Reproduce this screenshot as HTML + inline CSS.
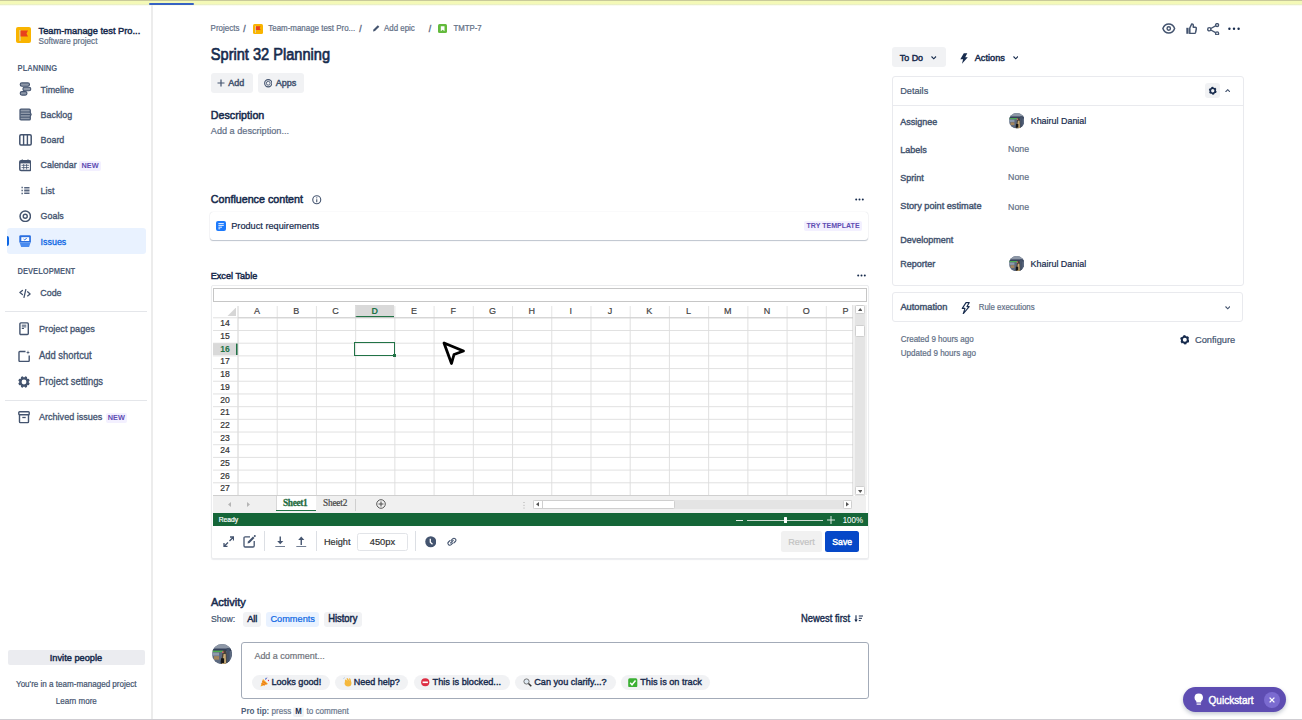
<!DOCTYPE html>
<html><head><meta charset="utf-8"><style>
html,body{margin:0;padding:0;}
body{width:1302px;height:720px;overflow:hidden;position:relative;background:#fff;font-family:"Liberation Sans",sans-serif;}
.t{position:absolute;white-space:nowrap;}
.r{position:absolute;}
</style></head><body>
<div class="r" style="left:0px;top:0px;width:1302px;height:6px;background:linear-gradient(#c8c99b 0px,#c8c99b 0.8px,#f4f9b7 1.2px,#f4f9b7 3.8px,#e9eec8 4.6px,#fbfcf4 5.6px,#fff 6px);"></div>
<div class="r" style="left:149.3px;top:3px;width:44.6px;height:2.2px;background:#3762c2;border-radius:1px;"></div>
<div class="r" style="left:0px;top:718.5px;width:1302px;height:1.5px;background:#cfcdd2;"></div>
<div class="r" style="left:151px;top:5px;width:2.4px;height:714px;background:#ececec;"></div>
<div class="r" style="left:15.5px;top:27px;width:15.5px;height:16px;background:#f9b400;border-radius:2px;"></div>
<svg class="r" style="left:15.5px;top:27px;" width="16" height="16" viewBox="0 0 16 16"><rect x="3.5" y="3" width="1" height="11" fill="#d9dde3"/><path d="M4.5 3.5 H12 L10.5 6.5 L12 9.5 H4.5Z" fill="#e8401c"/></svg>
















<div class="r" style="left:7px;top:228px;width:139px;height:25.5px;background:#e9f2ff;border-radius:3px;z-index:-1;"></div>
<div class="r" style="left:6.5px;top:236px;width:2.5px;height:9.5px;background:#0c66e4;border-radius:0 2px 2px 0;"></div>
<div class="r" style="left:79.4px;top:161px;width:21.7px;height:9.6px;background:#f3f0ff;border-radius:2px;z-index:-1;"></div>

<div class="r" style="left:105.6px;top:413px;width:21.7px;height:9.6px;background:#f3f0ff;border-radius:2px;z-index:-1;"></div>

<div class="r" style="left:5px;top:310.7px;width:142px;height:1px;background:#e4e6ea;"></div>
<div class="r" style="left:5px;top:399.5px;width:142px;height:1px;background:#e4e6ea;"></div>
<svg class="r" style="left:18.5px;top:82.2px;" width="13" height="14" viewBox="0 0 13 14"><rect x="1.2" y="0.9" width="9.3" height="3.4" rx="1.7" fill="#8f99a9" stroke="#44546f" stroke-width="1.1"/><rect x="3.9" y="5.2" width="7.9" height="3.5" rx="1.75" fill="#8f99a9" stroke="#44546f" stroke-width="1.1"/><rect x="1.2" y="9.6" width="6.8" height="3.5" rx="1.75" fill="#8f99a9" stroke="#44546f" stroke-width="1.1"/></svg>
<svg class="r" style="left:18.5px;top:108px;" width="13" height="13" viewBox="0 0 13 13"><path d="M2 1.2 H10.3 Q11.3 1.2 11.3 2.2 V4.6 L12.1 6.4 L11.3 8.2 V10.9 Q11.3 11.9 10.3 11.9 H2 Q1 11.9 1 10.9 V2.2 Q1 1.2 2 1.2Z" fill="#8f99a9" stroke="#44546f" stroke-width="1.2"/><path d="M1.2 4 H11 M1.6 6.6 H11.6 M1.2 9.2 H11" stroke="#44546f" stroke-width="1"/></svg>
<svg class="r" style="left:18.5px;top:134px;" width="13" height="12" viewBox="0 0 13 12"><rect x="0.8" y="0.8" width="11.4" height="10.2" rx="1.2" fill="none" stroke="#44546f" stroke-width="1.5"/><path d="M4.6 1 V11 M8.4 1 V11" stroke="#44546f" stroke-width="1.4"/></svg>
<svg class="r" style="left:18.8px;top:159px;" width="12.5" height="12.5" viewBox="0 0 12.5 12.5"><rect x="0.8" y="1.8" width="10.8" height="9.8" rx="1.3" fill="none" stroke="#44546f" stroke-width="1.5"/><rect x="0.8" y="1.8" width="10.8" height="2.6" fill="#44546f"/><path d="M3.3 0.5 V2.5 M9 0.5 V2.5" stroke="#44546f" stroke-width="1.3"/><path d="M2.5 6.3 H10 M2.5 8.6 H10 M4.7 5 V10.5 M7.6 5 V10.5" stroke="#44546f" stroke-width="0.8"/></svg>
<svg class="r" style="left:21px;top:185.5px;" width="9" height="10" viewBox="0 0 9 10"><path d="M0.5 1.5 H1.8 M0.5 4.5 H1.8 M0.5 7.5 H1.8" stroke="#44546f" stroke-width="1.3"/><path d="M3.2 1.5 H8.5 M3.2 3 H8.5 M3.2 4.5 H8.5 M3.2 6 H8.5 M3.2 7.5 H8.5" stroke="#44546f" stroke-width="0.9"/></svg>
<svg class="r" style="left:18.7px;top:209.8px;" width="12.5" height="12.5" viewBox="0 0 12.5 12.5"><circle cx="6.25" cy="6.25" r="5.2" fill="none" stroke="#44546f" stroke-width="1.5"/><circle cx="6.25" cy="6.25" r="2" fill="none" stroke="#44546f" stroke-width="1.4"/></svg>
<svg class="r" style="left:19px;top:234.8px;" width="12.5" height="12.5" viewBox="0 0 12.5 12.5"><path d="M1.6 0.3 H10.6 Q11.9 0.3 11.9 1.6 V7.6 H0.3 V1.6 Q0.3 0.3 1.6 0.3Z" fill="#2a6fe0"/><rect x="2.3" y="2.2" width="7.9" height="3.8" fill="#fff"/><path d="M4.6 4 L5.7 5 L7.7 3" stroke="#2a6fe0" stroke-width="1" fill="none"/><path d="M0.6 7.4 H11.6 L10 12.2 H2.2Z" fill="#4a8bef"/></svg>
<svg class="r" style="left:19px;top:289px;" width="12" height="9" viewBox="0 0 12 9"><path d="M3.4 1.5 L0.9 3.6 L3.4 5.5 M8.6 2.8 L11.1 4.9 L8.6 6.9 M6.8 0.6 L5 8.4" stroke="#44546f" stroke-width="1.3" fill="none" stroke-linecap="round" stroke-linejoin="round"/></svg>
<svg class="r" style="left:18.5px;top:322px;" width="10" height="13.5" viewBox="0 0 10 13.5"><rect x="0.9" y="0.9" width="8.4" height="11.6" rx="1" fill="none" stroke="#44546f" stroke-width="1.4"/><path d="M2.8 3.2 H7.3 M2.8 4.9 H7.3 M2.8 6.5 H5" stroke="#44546f" stroke-width="1"/></svg>
<svg class="r" style="left:18px;top:349.5px;" width="12.5" height="12.5" viewBox="0 0 12.5 12.5"><path d="M7.5 1.5 H1.8 Q1 1.5 1 2.3 V10.6 Q1 11.4 1.8 11.4 H10.4 Q11.2 11.4 11.2 10.6 V5.5" stroke="#44546f" stroke-width="1.4" fill="none"/><path d="M10 0.3 L10.5 1.9 L12 2.4 L10.5 2.9 L10 4.5 L9.5 2.9 L8 2.4 L9.5 1.9Z" fill="#44546f"/></svg>
<svg class="r" style="left:17.8px;top:376px;" width="12" height="12" viewBox="0 0 12 12"><path d="M10.76 6.58 L11.67 7.24 L10.88 9.13 L9.78 8.96 L8.96 9.78 L9.13 10.88 L7.24 11.67 L6.58 10.76 L5.42 10.76 L4.76 11.67 L2.87 10.88 L3.04 9.78 L2.22 8.96 L1.12 9.13 L0.33 7.24 L1.24 6.58 L1.24 5.42 L0.33 4.76 L1.12 2.87 L2.22 3.04 L3.04 2.22 L2.87 1.12 L4.76 0.33 L5.42 1.24 L6.58 1.24 L7.24 0.33 L9.13 1.12 L8.96 2.22 L9.78 3.04 L10.88 2.87 L11.67 4.76 L10.76 5.42Z M8.40 6.00 A2.4 2.4 0 1 0 3.60 6.00 A2.4 2.4 0 1 0 8.40 6.00Z" fill="#44546f" fill-rule="evenodd"/></svg>
<svg class="r" style="left:18px;top:411px;" width="12" height="12.5" viewBox="0 0 12 12.5"><rect x="0.8" y="0.8" width="10.4" height="3" rx="0.8" fill="none" stroke="#44546f" stroke-width="1.4"/><path d="M1.5 3.8 V10.8 Q1.5 11.6 2.3 11.6 H9.7 Q10.5 11.6 10.5 10.8 V3.8" fill="none" stroke="#44546f" stroke-width="1.4"/><path d="M4.3 6.5 H7.7" stroke="#44546f" stroke-width="1.3"/></svg>
<div class="r" style="left:8px;top:650px;width:137px;height:15px;background:#ebecf0;border-radius:2px;"></div>





<div class="r" style="left:252.8px;top:24px;width:10px;height:10px;background:#f9b400;border-radius:1.5px;"></div>
<svg class="r" style="left:252.8px;top:24px;" width="10" height="10" viewBox="0 0 10 10"><rect x="2.2" y="1.8" width="0.7" height="7" fill="#d9dde3"/><path d="M2.9 2.2 H7.6 L6.6 4 L7.6 5.9 H2.9Z" fill="#e8401c"/></svg>


<svg class="r" style="left:372px;top:24px;" width="8.5" height="8.5" viewBox="0 0 8.5 8.5"><path d="M1 7.5 L1.5 5.5 L5.8 1.2 L7.3 2.7 L3 7 Z" fill="#44546f"/></svg>


<div class="r" style="left:438.2px;top:24.2px;width:9.3px;height:9.3px;background:#63ba3c;border-radius:1.5px;"></div>
<svg class="r" style="left:438.2px;top:24.2px;" width="9.3" height="9.3" viewBox="0 0 9.3 9.3"><path d="M2.8 2.2 H6.5 V7.2 L4.65 5.7 L2.8 7.2Z" fill="#fff"/></svg>


<div class="r" style="left:210.6px;top:73.3px;width:42.2px;height:19.5px;background:#f1f2f4;border-radius:3px;"></div>
<svg class="r" style="left:216.5px;top:79px;" width="8" height="8" viewBox="0 0 8 8"><path d="M4 0.5 V7.5 M0.5 4 H7.5" stroke="#44546f" stroke-width="1.2"/></svg>

<div class="r" style="left:257.8px;top:73.3px;width:46.6px;height:19.5px;background:#f1f2f4;border-radius:3px;"></div>
<svg class="r" style="left:263.7px;top:79px;" width="8.5" height="8.5" viewBox="0 0 8.5 8.5"><circle cx="4.25" cy="4.25" r="3.6" fill="none" stroke="#44546f" stroke-width="1.1"/><circle cx="4.25" cy="4.25" r="1.9" fill="none" stroke="#44546f" stroke-width="0.9"/></svg>




<svg class="r" style="left:312.2px;top:195px;" width="9.5" height="9.5" viewBox="0 0 9.5 9.5"><circle cx="4.75" cy="4.75" r="4" fill="none" stroke="#44546f" stroke-width="1.1"/><path d="M4.75 4.2 V7.3" stroke="#44546f" stroke-width="1.1"/><circle cx="4.75" cy="2.8" r="0.65" fill="#44546f"/></svg>
<svg class="r" style="left:854.5px;top:197.5px;" width="9" height="3" viewBox="0 0 9 3"><circle cx="1.2" cy="1.5" r="1" fill="#172b4d"/><circle cx="4.5" cy="1.5" r="1" fill="#172b4d"/><circle cx="7.8" cy="1.5" r="1" fill="#172b4d"/></svg>
<div class="r" style="left:210.4px;top:212px;width:657.4px;height:28px;background:#fff;border-radius:3px;box-shadow:0 1px 1px rgba(9,30,66,0.25),0 0 1px rgba(9,30,66,0.2);"></div>
<div class="r" style="left:215.6px;top:221px;width:10.2px;height:9.8px;background:#1d7afc;border-radius:2px;"></div>
<svg class="r" style="left:215.6px;top:221px;" width="10.2" height="9.8" viewBox="0 0 10.2 9.8"><path d="M2.4 2.6 H7.8 M2.4 4.4 H7.8 M2.4 6.2 H6 M2.4 7.8 H4.2" stroke="#fff" stroke-width="0.9"/></svg>

<div class="r" style="left:803.9px;top:221.3px;width:58.5px;height:9.3px;background:#f3f0ff;border-radius:2px;"></div>


<svg class="r" style="left:857px;top:273.5px;" width="9" height="3" viewBox="0 0 9 3"><circle cx="1.2" cy="1.5" r="1" fill="#172b4d"/><circle cx="4.5" cy="1.5" r="1" fill="#172b4d"/><circle cx="7.8" cy="1.5" r="1" fill="#172b4d"/></svg>
<div class="r" style="left:210.5px;top:285.3px;width:658px;height:273.8px;border:1px solid #ebecee;border-radius:2px;box-sizing:border-box;box-shadow:0 1px 1px rgba(9,30,66,0.08);"></div>
<div class="r" style="left:213px;top:288px;width:654px;height:14.3px;border:1.2px solid #c6c6c6;border-top-width:1.6px;box-sizing:border-box;background:#fff;"></div>
<div class="r" style="left:212.5px;top:304.5px;width:640.0px;height:12.800000000000011px;background:#fff;"></div>
<svg class="r" style="left:226.5px;top:306.5px;" width="9.5" height="9.5" viewBox="0 0 9.5 9.5"><path d="M9.5 0 V9.5 H0Z" fill="#d6d6d6"/></svg>
<div class="r" style="left:355.15999999999997px;top:305.0px;width:39.22px;height:12.300000000000011px;background:#d9d9d9;"></div>
<div class="r" style="left:355.15999999999997px;top:315.7px;width:39.22px;height:2px;background:#217346;"></div>
<div class="r" style="left:212.5px;top:342.6857142857143px;width:25.0px;height:12.692857142857141px;background:#d9d9d9;"></div>
<div class="r" style="left:236.3px;top:342.6857142857143px;width:2px;height:12.692857142857141px;background:#217346;"></div>
<svg class="r" style="left:212.5px;top:304.5px;" width="641.0" height="191.5" viewBox="0 0 641.0 191.5"><path d="M64.22 1.00 V12.80" stroke="#e1e1e1" stroke-width="0.9"/><path d="M64.22 12.80 V190.50" stroke="#dcdcdc" stroke-width="0.9"/><path d="M103.44 1.00 V12.80" stroke="#e1e1e1" stroke-width="0.9"/><path d="M103.44 12.80 V190.50" stroke="#dcdcdc" stroke-width="0.9"/><path d="M142.66 1.00 V12.80" stroke="#e1e1e1" stroke-width="0.9"/><path d="M142.66 12.80 V190.50" stroke="#dcdcdc" stroke-width="0.9"/><path d="M181.88 1.00 V12.80" stroke="#e1e1e1" stroke-width="0.9"/><path d="M181.88 12.80 V190.50" stroke="#dcdcdc" stroke-width="0.9"/><path d="M221.10 1.00 V12.80" stroke="#e1e1e1" stroke-width="0.9"/><path d="M221.10 12.80 V190.50" stroke="#dcdcdc" stroke-width="0.9"/><path d="M260.32 1.00 V12.80" stroke="#e1e1e1" stroke-width="0.9"/><path d="M260.32 12.80 V190.50" stroke="#dcdcdc" stroke-width="0.9"/><path d="M299.54 1.00 V12.80" stroke="#e1e1e1" stroke-width="0.9"/><path d="M299.54 12.80 V190.50" stroke="#dcdcdc" stroke-width="0.9"/><path d="M338.76 1.00 V12.80" stroke="#e1e1e1" stroke-width="0.9"/><path d="M338.76 12.80 V190.50" stroke="#dcdcdc" stroke-width="0.9"/><path d="M377.98 1.00 V12.80" stroke="#e1e1e1" stroke-width="0.9"/><path d="M377.98 12.80 V190.50" stroke="#dcdcdc" stroke-width="0.9"/><path d="M417.20 1.00 V12.80" stroke="#e1e1e1" stroke-width="0.9"/><path d="M417.20 12.80 V190.50" stroke="#dcdcdc" stroke-width="0.9"/><path d="M456.42 1.00 V12.80" stroke="#e1e1e1" stroke-width="0.9"/><path d="M456.42 12.80 V190.50" stroke="#dcdcdc" stroke-width="0.9"/><path d="M495.64 1.00 V12.80" stroke="#e1e1e1" stroke-width="0.9"/><path d="M495.64 12.80 V190.50" stroke="#dcdcdc" stroke-width="0.9"/><path d="M534.86 1.00 V12.80" stroke="#e1e1e1" stroke-width="0.9"/><path d="M534.86 12.80 V190.50" stroke="#dcdcdc" stroke-width="0.9"/><path d="M574.08 1.00 V12.80" stroke="#e1e1e1" stroke-width="0.9"/><path d="M574.08 12.80 V190.50" stroke="#dcdcdc" stroke-width="0.9"/><path d="M613.30 1.00 V12.80" stroke="#e1e1e1" stroke-width="0.9"/><path d="M613.30 12.80 V190.50" stroke="#dcdcdc" stroke-width="0.9"/><path d="M25.00 1 V190.50" stroke="#d2d2d2" stroke-width="1"/><path d="M0 12.80 H640.00" stroke="#dedede" stroke-width="0.9"/><path d="M0 25.49 H640.00" stroke="#dedede" stroke-width="0.9"/><path d="M0 38.19 H640.00" stroke="#dedede" stroke-width="0.9"/><path d="M0 50.88 H640.00" stroke="#dedede" stroke-width="0.9"/><path d="M0 63.57 H640.00" stroke="#dedede" stroke-width="0.9"/><path d="M0 76.26 H640.00" stroke="#dedede" stroke-width="0.9"/><path d="M0 88.96 H640.00" stroke="#dedede" stroke-width="0.9"/><path d="M0 101.65 H640.00" stroke="#dedede" stroke-width="0.9"/><path d="M0 114.34 H640.00" stroke="#dedede" stroke-width="0.9"/><path d="M0 127.04 H640.00" stroke="#dedede" stroke-width="0.9"/><path d="M0 139.73 H640.00" stroke="#dedede" stroke-width="0.9"/><path d="M0 152.42 H640.00" stroke="#dedede" stroke-width="0.9"/><path d="M0 165.11 H640.00" stroke="#dedede" stroke-width="0.9"/><path d="M0 177.81 H640.00" stroke="#dedede" stroke-width="0.9"/><path d="M0 190.50 H640.00" stroke="#dedede" stroke-width="0.9"/><path d="M25.00 12.80 H640.00" stroke="#cfcfcf" stroke-width="1.1"/><path d="M0 190.50 H640.00" stroke="#cfcfcf" stroke-width="1.1"/><path d="M640.00 0 V190.50" stroke="#c8c8c8" stroke-width="1"/></svg>
<div class="r" style="left:354.15999999999997px;top:342.0857142857143px;width:40.42px;height:13.89285714285714px;border:1.6px solid #217346;box-sizing:border-box;"></div>
<div class="r" style="left:392.78px;top:353.7785714285714px;width:3.4px;height:3.4px;background:#217346;"></div>
<div class="r" style="left:853px;top:304.5px;width:14px;height:190.5px;background:#f0f0f0;"></div>
<div class="r" style="left:855px;top:305.5px;width:10px;height:190px;background:#e4e4e4;"></div>
<div class="r" style="left:855px;top:305.3px;width:9.5px;height:9px;background:#fff;border:0.8px solid #cfcfcf;border-radius:1.5px;box-sizing:border-box;"></div>
<svg class="r" style="left:857.5px;top:308px;" width="4.5" height="3" viewBox="0 0 4.5 3"><path d="M0 3 L2.25 0 L4.5 3Z" fill="#555"/></svg>
<div class="r" style="left:855px;top:325.3px;width:9.5px;height:11.5px;background:#fff;border:0.8px solid #cfcfcf;border-radius:1.5px;box-sizing:border-box;"></div>
<div class="r" style="left:855px;top:486.3px;width:9.5px;height:9px;background:#fff;border:0.8px solid #cfcfcf;border-radius:1.5px;box-sizing:border-box;"></div>
<svg class="r" style="left:857.5px;top:489.5px;" width="4.5" height="3" viewBox="0 0 4.5 3"><path d="M0 0 L2.25 3 L4.5 0Z" fill="#555"/></svg>
<div class="r" style="left:212.5px;top:495.5px;width:653.5px;height:17.5px;background:#f0f0f0;"></div>
<svg class="r" style="left:227.5px;top:501.5px;" width="3" height="5" viewBox="0 0 3 5"><path d="M3 0 L0 2.5 L3 5Z" fill="#b5b5b5"/></svg>
<svg class="r" style="left:246.5px;top:501.5px;" width="3" height="5" viewBox="0 0 3 5"><path d="M0 0 L3 2.5 L0 5Z" fill="#b5b5b5"/></svg>
<div class="r" style="left:275.5px;top:495.5px;width:40px;height:15.2px;background:#fff;border-left:0.8px solid #d8d8d8;box-sizing:border-box;"></div>
<div class="r" style="left:275.5px;top:509.5px;width:40px;height:1.5px;background:#217346;"></div>


<div class="r" style="left:354.8px;top:498.5px;width:0.9px;height:12px;background:#cfcfcf;"></div>
<svg class="r" style="left:376.3px;top:499.2px;" width="10" height="10" viewBox="0 0 10 10"><circle cx="5" cy="5" r="4.3" fill="none" stroke="#505050" stroke-width="0.95"/><path d="M5 2.5 V7.5 M2.5 5 H7.5" stroke="#505050" stroke-width="1.05"/></svg>
<svg class="r" style="left:522.8px;top:501.5px;" width="2" height="7" viewBox="0 0 2 7"><circle cx="1" cy="0.6" r="0.5" fill="#999"/><circle cx="1" cy="3.3" r="0.5" fill="#999"/><circle cx="1" cy="6" r="0.5" fill="#999"/></svg>
<div class="r" style="left:532.8px;top:499.6px;width:319.5px;height:9.5px;background:#e4e4e4;"></div>
<div class="r" style="left:532.8px;top:499.6px;width:142px;height:9.5px;background:#fff;border:0.8px solid #cfcfcf;border-radius:1.5px;box-sizing:border-box;"></div>
<div class="r" style="left:541.8px;top:499.6px;width:0.9px;height:9.5px;background:#cfcfcf;"></div>
<svg class="r" style="left:536px;top:502.3px;" width="3" height="4.4" viewBox="0 0 3 4.4"><path d="M3 0 L0 2.2 L3 4.4Z" fill="#555"/></svg>
<div class="r" style="left:842.8px;top:499.6px;width:9.4px;height:9.5px;background:#fff;border:0.8px solid #cfcfcf;border-radius:1.5px;box-sizing:border-box;"></div>
<svg class="r" style="left:846.3px;top:502.3px;" width="3" height="4.4" viewBox="0 0 3 4.4"><path d="M0 0 L3 2.2 L0 4.4Z" fill="#555"/></svg>
<div class="r" style="left:212.5px;top:512.8px;width:655px;height:12.9px;background:#156638;"></div>

<div class="r" style="left:736px;top:519.6px;width:7px;height:0.8px;background:#e6efe9;"></div>
<div class="r" style="left:747px;top:519.6px;width:76px;height:0.7px;background:#cfdcd3;"></div>
<div class="r" style="left:784px;top:517px;width:2.7px;height:6.3px;background:#fff;border-radius:0.5px;"></div>
<svg class="r" style="left:827px;top:515.8px;" width="8" height="8" viewBox="0 0 8 8"><path d="M4 0 V8 M0 4 H8" stroke="#f2f6f3" stroke-width="0.9"/></svg>

<svg class="r" style="left:222.5px;top:535.5px;" width="11.5" height="11.5" viewBox="0 0 11.5 11.5"><path d="M6.5 5 L10.3 1.2 M7 1 H10.5 V4.5 M5 6.5 L1.2 10.3 M1 7 V10.5 H4.5" stroke="#44546f" stroke-width="1.3" fill="none"/></svg>
<svg class="r" style="left:243px;top:535px;" width="13" height="13" viewBox="0 0 13 13"><path d="M7 1.8 H2.2 Q1 1.8 1 3 V10.8 Q1 12 2.2 12 H10 Q11.2 12 11.2 10.8 V6" stroke="#44546f" stroke-width="1.3" fill="none"/><path d="M4.5 8.5 L5 6.5 L10 1.5 L11.5 3 L6.5 8Z" fill="#44546f"/><circle cx="11.8" cy="1.1" r="1" fill="#44546f"/></svg>
<div class="r" style="left:264.2px;top:531px;width:0.9px;height:20px;background:#dcdfe4;"></div>
<svg class="r" style="left:274.5px;top:535.5px;" width="10.5" height="11.5" viewBox="0 0 10.5 11.5"><path d="M5.25 0.5 V6.5" stroke="#44546f" stroke-width="1.4"/><path d="M2.2 5 L5.25 8.2 L8.3 5Z" fill="#44546f"/><path d="M0.3 10.8 H10.2" stroke="#44546f" stroke-width="1.1"/></svg>
<svg class="r" style="left:296px;top:535.5px;" width="10.5" height="11.5" viewBox="0 0 10.5 11.5"><path d="M5.25 3 V9" stroke="#44546f" stroke-width="1.4"/><path d="M2.2 4 L5.25 0.6 L8.3 4Z" fill="#44546f"/><path d="M0.3 10.8 H10.2" stroke="#44546f" stroke-width="1.1"/></svg>
<div class="r" style="left:316px;top:531px;width:0.9px;height:20px;background:#dcdfe4;"></div>

<div class="r" style="left:357.4px;top:532.5px;width:50.2px;height:18px;background:#fff;border:1px solid #e2e4e8;border-radius:2.5px;box-sizing:border-box;"></div>

<div class="r" style="left:415px;top:531px;width:0.9px;height:20px;background:#dcdfe4;"></div>
<svg class="r" style="left:424.6px;top:536px;" width="11.5" height="11.5" viewBox="0 0 11.5 11.5"><circle cx="5.75" cy="5.75" r="5.5" fill="#44546f"/><path d="M5.3 2.8 V6.2 L7.5 8.2" stroke="#fff" stroke-width="1.3" fill="none"/></svg>
<svg class="r" style="left:447px;top:536.8px;" width="10" height="9.5" viewBox="0 0 10 9.5"><path d="M4.2 3.3 L5.6 1.9 Q7 0.6 8.3 1.9 Q9.6 3.2 8.3 4.5 L6.9 5.9 M5.6 6.2 L4.2 7.6 Q2.8 8.9 1.5 7.6 Q0.2 6.3 1.5 5 L2.9 3.6 M3.6 6 L6.2 3.4" stroke="#44546f" stroke-width="1.1" fill="none" stroke-linecap="round"/></svg>
<div class="r" style="left:781.4px;top:531.1px;width:40.3px;height:20.8px;background:#f1f1f1;border-radius:2.5px;"></div>

<div class="r" style="left:825.3px;top:531.1px;width:33.8px;height:20.8px;background:#0648c8;border-radius:2.5px;"></div>



<div class="r" style="left:243.1px;top:611.5px;width:17.8px;height:15.1px;background:#f1f2f4;border-radius:3px;"></div>

<div class="r" style="left:266.4px;top:611.5px;width:52.2px;height:15.1px;background:#e9f2ff;border-radius:3px;"></div>

<div class="r" style="left:324.2px;top:611.5px;width:37.4px;height:15.1px;background:#f1f2f4;border-radius:3px;"></div>


<svg class="r" style="left:854px;top:615px;" width="9.5" height="8" viewBox="0 0 9.5 8"><path d="M2 0.3 V6" stroke="#172b4d" stroke-width="1.1"/><path d="M0.3 4.6 L2 7.2 L3.7 4.6Z" fill="#172b4d"/><path d="M4.8 1 H9 M4.8 3.3 H8 M4.8 5.6 H6.8" stroke="#172b4d" stroke-width="1"/></svg>
<svg class="r" style="left:211.8px;top:644px;" width="20.2" height="20.2" viewBox="0 0 20.2 20.2"><defs><clipPath id="c211644"><circle cx="10" cy="10" r="10"/></clipPath></defs><g clip-path="url(#c211644)" transform="scale(1.01)"><rect width="20" height="20" fill="#5d6a80"/><rect width="20" height="5" fill="#8d97a6"/><rect x="0" y="4.5" width="20" height="2.5" fill="#34405a"/><rect x="0.5" y="6.5" width="11" height="1.6" fill="#4fae52"/><rect x="0" y="8.5" width="7" height="3" fill="#8e9aad"/><path d="M11 6.5 Q14 5.5 14.5 9 L16 20 H9 L10 11Z" fill="#4a4238"/><path d="M11.5 10 L13.5 10 L14 20 H10Z" fill="#c9ab75"/><path d="M9 14 L12 14 L12 19 L8.5 18.5Z" fill="#151515"/><rect x="2" y="12" width="5" height="3.5" fill="#a3865e"/><rect x="14.5" y="4" width="3" height="16" fill="#46536a"/><circle cx="10.8" cy="8" r="0.9" fill="#e06a6a"/></g></svg>
<div class="r" style="left:241px;top:641.5px;width:627.8px;height:57.3px;border:1px solid #a3abb8;border-radius:3px;box-sizing:border-box;"></div>

<div class="r" style="left:252.2px;top:675.2px;width:77.40000000000003px;height:15.2px;background:#f1f2f4;border-radius:8px;"></div>

<div class="r" style="left:335.4px;top:675.2px;width:72.20000000000005px;height:15.2px;background:#f1f2f4;border-radius:8px;"></div>

<div class="r" style="left:413.7px;top:675.2px;width:96.0px;height:15.2px;background:#f1f2f4;border-radius:8px;"></div>

<div class="r" style="left:515.2px;top:675.2px;width:100.39999999999998px;height:15.2px;background:#f1f2f4;border-radius:8px;"></div>

<div class="r" style="left:621.3px;top:675.2px;width:88.70000000000005px;height:15.2px;background:#f1f2f4;border-radius:8px;"></div>

<svg class="r" style="left:259.5px;top:677px;" width="9.5" height="10" viewBox="0 0 9.5 10"><path d="M0.5 9.5 L3 2 L8 7Z" fill="#f4a623"/><path d="M1.5 6.5 L5 8.2 M2.3 4.2 L6.5 7" stroke="#e8591a" stroke-width="0.8"/><circle cx="6" cy="1.5" r="0.8" fill="#3aa3e3"/><circle cx="8.5" cy="3.5" r="0.7" fill="#e0245e"/><path d="M5 3 Q6.5 2 7 0.5" stroke="#9b59b6" stroke-width="0.7" fill="none"/></svg>
<svg class="r" style="left:343px;top:677px;" width="9" height="10" viewBox="0 0 9 10"><path d="M2 4 Q1.5 2 3 2.5 L4.5 4 L3.5 1.5 Q4 0.5 5 1.5 L6.5 4 L6 1.5 Q6.8 0.8 7.5 2 L8.5 6 Q8.5 9.5 5 9.5 Q2.5 9.5 1.5 7Z" fill="#f5b83d"/><path d="M0.5 2 Q0.8 0.8 1.8 0.5" stroke="#a3c2e0" stroke-width="0.6" fill="none"/></svg>
<svg class="r" style="left:421.4px;top:678px;" width="8.5" height="8.5" viewBox="0 0 8.5 8.5"><circle cx="4.25" cy="4.25" r="4.1" fill="#dd2e44"/><rect x="1.6" y="3.5" width="5.3" height="1.6" fill="#fff"/></svg>
<svg class="r" style="left:522.9px;top:677.5px;" width="9" height="9" viewBox="0 0 9 9"><circle cx="3.5" cy="3.5" r="2.6" fill="#dfe9f2" stroke="#666" stroke-width="0.9"/><path d="M5.5 5.5 L8.3 8.3" stroke="#333" stroke-width="1.5"/></svg>
<svg class="r" style="left:628px;top:677.5px;" width="9.5" height="9.5" viewBox="0 0 9.5 9.5"><rect x="0.2" y="0.2" width="9.1" height="9.1" rx="1.5" fill="#3cb034"/><path d="M2.2 4.8 L4 6.8 L7.5 2.5" stroke="#fff" stroke-width="1.4" fill="none"/></svg>

<div class="r" style="left:293px;top:707px;width:11px;height:9.5px;background:#f1f2f4;border-radius:2px;"></div>


<svg class="r" style="left:1162px;top:23px;" width="13.5" height="11" viewBox="0 0 13.5 11"><path d="M0.9 5.5 Q2.5 1 6.75 1 Q11 1 12.6 5.5 Q11 10 6.75 10 Q2.5 10 0.9 5.5Z" fill="none" stroke="#44546f" stroke-width="1.5"/><circle cx="6.75" cy="5.5" r="1.7" fill="none" stroke="#44546f" stroke-width="1.4"/></svg>
<svg class="r" style="left:1186px;top:23px;" width="11" height="11.2" viewBox="0 0 11 11.2"><path d="M0.3 4.8 H2.6 V10.8 H0.3Z" fill="#44546f"/><path d="M3.8 5 L5.7 1 Q7.3 0.6 7.3 2.6 V4.3 H9.2 Q10.6 4.4 10.3 5.9 L9.6 9.4 Q9.3 10.5 8.2 10.5 H3.8Z" fill="none" stroke="#44546f" stroke-width="1.5" stroke-linejoin="round"/></svg>
<svg class="r" style="left:1207px;top:22.5px;" width="12.5" height="12.5" viewBox="0 0 12.5 12.5"><circle cx="2.3" cy="6.25" r="1.6" fill="none" stroke="#44546f" stroke-width="1.4"/><circle cx="10.1" cy="2.1" r="1.5" fill="none" stroke="#44546f" stroke-width="1.4"/><circle cx="10.1" cy="10.4" r="1.5" fill="none" stroke="#44546f" stroke-width="1.4"/><path d="M3.8 5.5 L8.6 2.9 M3.8 7 L8.6 9.6" stroke="#44546f" stroke-width="1.3"/></svg>
<svg class="r" style="left:1227.5px;top:27px;" width="12" height="3.5" viewBox="0 0 12 3.5"><circle cx="1.4" cy="1.75" r="1.2" fill="#172b4d"/><circle cx="6" cy="1.75" r="1.2" fill="#172b4d"/><circle cx="10.6" cy="1.75" r="1.2" fill="#172b4d"/></svg>
<div class="r" style="left:892.3px;top:47.3px;width:53.7px;height:20.1px;background:#f1f2f4;border-radius:3px;"></div>

<svg class="r" style="left:931px;top:56px;" width="5.5" height="3.5" viewBox="0 0 5.5 3.5"><path d="M0.5 0.5 L2.75 2.8 L5 0.5" stroke="#172b4d" stroke-width="1.1" fill="none"/></svg>
<svg class="r" style="left:960px;top:52.5px;" width="8" height="11" viewBox="0 0 8 11"><path d="M3.8 0.2 H7.3 L5.2 4.2 H7.8 L2 10.8 L3.1 6.3 H0.3Z" fill="#172b4d"/></svg>

<svg class="r" style="left:1012.8px;top:56px;" width="5.5" height="3.5" viewBox="0 0 5.5 3.5"><path d="M0.5 0.5 L2.75 2.8 L5 0.5" stroke="#172b4d" stroke-width="1.1" fill="none"/></svg>
<div class="r" style="left:892px;top:75.6px;width:351.5px;height:210.6px;border:1px solid #e9eaee;border-radius:3px;box-sizing:border-box;"></div>
<div class="r" style="left:892.5px;top:105px;width:350.5px;height:1px;background:#e9eaee;"></div>

<div class="r" style="left:1205px;top:83px;width:14.8px;height:15.4px;background:#f1f2f4;border-radius:3px;"></div>
<svg class="r" style="left:1207.7px;top:85.8px;" width="9.5" height="9.5" viewBox="0 0 9.5 9.5"><path d="M8.09 4.96 L8.69 5.45 L8.03 7.04 L7.26 6.97 L6.24 7.75 L6.11 8.51 L4.41 8.74 L4.08 8.03 L2.90 7.54 L2.17 7.81 L1.13 6.45 L1.57 5.81 L1.41 4.54 L0.81 4.05 L1.47 2.46 L2.24 2.53 L3.26 1.75 L3.39 0.99 L5.09 0.76 L5.42 1.47 L6.60 1.96 L7.33 1.69 L8.37 3.05 L7.93 3.69Z M6.40 4.75 A1.65 1.65 0 1 0 3.10 4.75 A1.65 1.65 0 1 0 6.40 4.75Z" fill="#172b4d" fill-rule="evenodd"/></svg>
<svg class="r" style="left:1224.8px;top:88.9px;" width="5.5" height="3.5" viewBox="0 0 5.5 3.5"><path d="M0.5 3 L2.75 0.7 L5 3" stroke="#44546f" stroke-width="1.1" fill="none"/></svg>






<svg class="r" style="left:1008.8px;top:113.2px;" width="15.6" height="15.6" viewBox="0 0 15.6 15.6"><defs><clipPath id="c1008113"><circle cx="10" cy="10" r="10"/></clipPath></defs><g clip-path="url(#c1008113)" transform="scale(0.78)"><rect width="20" height="20" fill="#5d6a80"/><rect width="20" height="5" fill="#8d97a6"/><rect x="0" y="4.5" width="20" height="2.5" fill="#34405a"/><rect x="0.5" y="6.5" width="11" height="1.6" fill="#4fae52"/><rect x="0" y="8.5" width="7" height="3" fill="#8e9aad"/><path d="M11 6.5 Q14 5.5 14.5 9 L16 20 H9 L10 11Z" fill="#4a4238"/><path d="M11.5 10 L13.5 10 L14 20 H10Z" fill="#c9ab75"/><path d="M9 14 L12 14 L12 19 L8.5 18.5Z" fill="#151515"/><rect x="2" y="12" width="5" height="3.5" fill="#a3865e"/><rect x="14.5" y="4" width="3" height="16" fill="#46536a"/><circle cx="10.8" cy="8" r="0.9" fill="#e06a6a"/></g></svg>




<svg class="r" style="left:1008.8px;top:255.7px;" width="15.4" height="15.4" viewBox="0 0 15.4 15.4"><defs><clipPath id="c1008255"><circle cx="10" cy="10" r="10"/></clipPath></defs><g clip-path="url(#c1008255)" transform="scale(0.77)"><rect width="20" height="20" fill="#5d6a80"/><rect width="20" height="5" fill="#8d97a6"/><rect x="0" y="4.5" width="20" height="2.5" fill="#34405a"/><rect x="0.5" y="6.5" width="11" height="1.6" fill="#4fae52"/><rect x="0" y="8.5" width="7" height="3" fill="#8e9aad"/><path d="M11 6.5 Q14 5.5 14.5 9 L16 20 H9 L10 11Z" fill="#4a4238"/><path d="M11.5 10 L13.5 10 L14 20 H10Z" fill="#c9ab75"/><path d="M9 14 L12 14 L12 19 L8.5 18.5Z" fill="#151515"/><rect x="2" y="12" width="5" height="3.5" fill="#a3865e"/><rect x="14.5" y="4" width="3" height="16" fill="#46536a"/><circle cx="10.8" cy="8" r="0.9" fill="#e06a6a"/></g></svg>

<div class="r" style="left:892px;top:291.9px;width:351.3px;height:30.2px;border:1px solid #e9eaee;border-radius:3px;box-sizing:border-box;"></div>

<svg class="r" style="left:960.5px;top:301.5px;" width="9" height="12.5" viewBox="0 0 9 12.5"><path d="M5 0.6 H8.3 L6 4.6 H8.2 L2.2 11.8 L4 6.4 H1.3Z" fill="none" stroke="#172b4d" stroke-width="1.1" stroke-linejoin="round"/></svg>

<svg class="r" style="left:1224.8px;top:306px;" width="5.5" height="3.5" viewBox="0 0 5.5 3.5"><path d="M0.5 0.5 L2.75 2.8 L5 0.5" stroke="#44546f" stroke-width="1.1" fill="none"/></svg>


<svg class="r" style="left:1179.8px;top:335.3px;" width="9.6" height="9.6" viewBox="0 0 9.6 9.6"><path d="M8.74 5.04 L9.43 5.63 L8.66 7.49 L7.76 7.42 L6.56 8.34 L6.40 9.22 L4.40 9.48 L4.01 8.67 L2.62 8.09 L1.77 8.39 L0.54 6.80 L1.05 6.05 L0.86 4.56 L0.17 3.97 L0.94 2.11 L1.84 2.18 L3.04 1.26 L3.20 0.38 L5.20 0.12 L5.59 0.93 L6.98 1.51 L7.83 1.21 L9.06 2.80 L8.55 3.55Z M6.80 4.80 A2.0 2.0 0 1 0 2.80 4.80 A2.0 2.0 0 1 0 6.80 4.80Z" fill="#172b4d" fill-rule="evenodd"/></svg>

<div class="r" style="left:1183px;top:687.3px;width:103.2px;height:24.8px;background:#5e4db2;border-radius:12.4px;box-shadow:0 2px 4px rgba(9,30,66,0.25);"></div>
<svg class="r" style="left:1193.5px;top:692.5px;" width="9.5" height="13.5" viewBox="0 0 9.5 13.5"><path d="M4.75 0.5 Q9 0.5 9 4.8 Q9 6.8 7.2 8.3 V9.6 H2.3 V8.3 Q0.5 6.8 0.5 4.8 Q0.5 0.5 4.75 0.5Z" fill="#fff"/><rect x="2.6" y="10.5" width="4.3" height="1.2" fill="#fff"/></svg>

<div class="r" style="left:1263.7px;top:691.5px;width:16.4px;height:16.4px;background:#7b6bd0;border-radius:50%;"></div>
<svg class="r" style="left:1268.9px;top:696.7px;" width="6" height="6" viewBox="0 0 6 6"><path d="M0.6 0.6 L5.4 5.4 M5.4 0.6 L0.6 5.4" stroke="#fff" stroke-width="1.3"/></svg>
<svg class="r" style="left:0;top:0;font-family:'Liberation Sans',sans-serif" width="1302" height="720"><text x="38.50" y="34.05" transform="matrix(1 0 0 1.07 0 -2.384)" style="font-size:9.3px;font-weight:400;fill:#172b4d;stroke:#172b4d;stroke-width:0.45px;">Team-manage test Pro...</text>
<text x="38.50" y="43.55" transform="matrix(1 0 0 1.07 0 -3.049)" style="font-size:8.17px;font-weight:400;fill:#626f86;stroke:#626f86;stroke-width:0.2px;">Software project</text>
<text x="17.60" y="70.75" transform="matrix(1 0 0 1.07 0 -4.953)" style="font-size:7.6px;font-weight:700;fill:#505f79;stroke:#505f79;stroke-width:0.0px;">PLANNING</text>
<text x="40.60" y="93.05" transform="matrix(1 0 0 1.07 0 -6.514)" style="font-size:8.9px;font-weight:400;fill:#44546f;stroke:#44546f;stroke-width:0.3px;">Timeline</text>
<text x="40.60" y="118.15" transform="matrix(1 0 0 1.07 0 -8.271)" style="font-size:8.9px;font-weight:400;fill:#44546f;stroke:#44546f;stroke-width:0.3px;">Backlog</text>
<text x="40.60" y="143.15" transform="matrix(1 0 0 1.07 0 -10.021)" style="font-size:8.9px;font-weight:400;fill:#44546f;stroke:#44546f;stroke-width:0.3px;">Board</text>
<text x="40.60" y="168.25" transform="matrix(1 0 0 1.07 0 -11.778)" style="font-size:8.9px;font-weight:400;fill:#44546f;stroke:#44546f;stroke-width:0.3px;">Calendar</text>
<text x="40.60" y="193.95" transform="matrix(1 0 0 1.07 0 -13.577)" style="font-size:8.9px;font-weight:400;fill:#44546f;stroke:#44546f;stroke-width:0.3px;">List</text>
<text x="40.60" y="219.15" transform="matrix(1 0 0 1.07 0 -15.341)" style="font-size:8.9px;font-weight:400;fill:#44546f;stroke:#44546f;stroke-width:0.3px;">Goals</text>
<text x="40.60" y="244.55" transform="matrix(1 0 0 1.07 0 -17.119)" style="font-size:8.9px;font-weight:400;fill:#0c66e4;stroke:#0c66e4;stroke-width:0.3px;">Issues</text>
<text x="17.50" y="274.15" transform="matrix(1 0 0 1.07 0 -19.191)" style="font-size:7.6px;font-weight:700;fill:#505f79;stroke:#505f79;stroke-width:0.0px;">DEVELOPMENT</text>
<text x="40.30" y="296.05" transform="matrix(1 0 0 1.07 0 -20.724)" style="font-size:8.9px;font-weight:400;fill:#44546f;stroke:#44546f;stroke-width:0.3px;">Code</text>
<text x="39.00" y="331.65" transform="matrix(1 0 0 1.07 0 -23.216)" style="font-size:9.15px;font-weight:400;fill:#44546f;stroke:#44546f;stroke-width:0.3px;">Project pages</text>
<text x="39.00" y="359.05" transform="matrix(1 0 0 1.07 0 -25.134)" style="font-size:9.4px;font-weight:400;fill:#44546f;stroke:#44546f;stroke-width:0.3px;">Add shortcut</text>
<text x="39.00" y="385.35" transform="matrix(1 0 0 1.07 0 -26.975)" style="font-size:9.38px;font-weight:400;fill:#44546f;stroke:#44546f;stroke-width:0.3px;">Project settings</text>
<text x="39.00" y="419.75" transform="matrix(1 0 0 1.07 0 -29.383)" style="font-size:9.07px;font-weight:400;fill:#44546f;stroke:#44546f;stroke-width:0.3px;">Archived issues</text>
<text x="81.60" y="168.35" transform="matrix(1 0 0 1.07 0 -11.785)" style="font-size:7.3px;font-weight:700;fill:#5e4db2;stroke:#5e4db2;stroke-width:0.0px;">NEW</text>
<text x="107.80" y="420.35" transform="matrix(1 0 0 1.07 0 -29.425)" style="font-size:7.3px;font-weight:700;fill:#5e4db2;stroke:#5e4db2;stroke-width:0.0px;">NEW</text>
<text x="49.80" y="660.75" transform="matrix(1 0 0 1.07 0 -46.253)" style="font-size:9.25px;font-weight:400;fill:#172b4d;stroke:#172b4d;stroke-width:0.45px;">Invite people</text>
<text x="16.00" y="687.35" transform="matrix(1 0 0 1.07 0 -48.115)" style="font-size:8.09px;font-weight:400;fill:#44546f;stroke:#44546f;stroke-width:0.2px;">You're in a team-managed project</text>
<text x="55.80" y="704.45" transform="matrix(1 0 0 1.07 0 -49.312)" style="font-size:8.02px;font-weight:400;fill:#44546f;stroke:#44546f;stroke-width:0.2px;">Learn more</text>
<text x="210.60" y="30.65" transform="matrix(1 0 0 1.07 0 -2.146)" style="font-size:7.97px;font-weight:400;fill:#626f86;stroke:#626f86;stroke-width:0.2px;">Projects</text>
<text x="243.30" y="31.55" transform="matrix(1 0 0 1.07 0 -2.209)" style="font-size:8.5px;font-weight:400;fill:#626f86;stroke:#626f86;stroke-width:0.4px;">/</text>
<text x="268.30" y="30.65" transform="matrix(1 0 0 1.07 0 -2.146)" style="font-size:7.95px;font-weight:400;fill:#626f86;stroke:#626f86;stroke-width:0.2px;">Team-manage test Pro...</text>
<text x="359.30" y="31.55" transform="matrix(1 0 0 1.07 0 -2.209)" style="font-size:8.5px;font-weight:400;fill:#626f86;stroke:#626f86;stroke-width:0.4px;">/</text>
<text x="384.00" y="30.65" transform="matrix(1 0 0 1.07 0 -2.146)" style="font-size:7.91px;font-weight:400;fill:#626f86;stroke:#626f86;stroke-width:0.2px;">Add epic</text>
<text x="428.70" y="31.55" transform="matrix(1 0 0 1.07 0 -2.209)" style="font-size:8.5px;font-weight:400;fill:#626f86;stroke:#626f86;stroke-width:0.4px;">/</text>
<text x="453.50" y="30.65" transform="matrix(1 0 0 1.07 0 -2.146)" style="font-size:7.81px;font-weight:400;fill:#626f86;stroke:#626f86;stroke-width:0.2px;">TMTP-7</text>
<text x="210.80" y="59.75" transform="matrix(1 0 0 1.07 0 -4.183)" style="font-size:14.6px;font-weight:400;fill:#172b4d;stroke:#172b4d;stroke-width:0.6px;">Sprint 32 Planning</text>
<text x="228.30" y="85.85" transform="matrix(1 0 0 1.07 0 -6.010)" style="font-size:9.0px;font-weight:400;fill:#44546f;stroke:#44546f;stroke-width:0.45px;">Add</text>
<text x="275.80" y="85.85" transform="matrix(1 0 0 1.07 0 -6.010)" style="font-size:9.05px;font-weight:400;fill:#44546f;stroke:#44546f;stroke-width:0.45px;">Apps</text>
<text x="210.80" y="118.55" transform="matrix(1 0 0 1.07 0 -8.299)" style="font-size:10.7px;font-weight:400;fill:#172b4d;stroke:#172b4d;stroke-width:0.5px;">Description</text>
<text x="210.80" y="134.35" transform="matrix(1 0 0 1.07 0 -9.405)" style="font-size:9.16px;font-weight:400;fill:#626f86;stroke:#626f86;stroke-width:0.2px;">Add a description...</text>
<text x="210.80" y="203.05" transform="matrix(1 0 0 1.07 0 -14.214)" style="font-size:10.7px;font-weight:400;fill:#172b4d;stroke:#172b4d;stroke-width:0.5px;">Confluence content</text>
<text x="231.20" y="228.85" transform="matrix(1 0 0 1.07 0 -16.020)" style="font-size:9.2px;font-weight:400;fill:#172b4d;stroke:#172b4d;stroke-width:0.2px;">Product requirements</text>
<text x="806.50" y="228.35" transform="matrix(1 0 0 1.07 0 -15.985)" style="font-size:7.05px;font-weight:700;fill:#5e4db2;stroke:#5e4db2;stroke-width:0.0px;">TRY TEMPLATE</text>
<text x="210.70" y="278.85" transform="matrix(1 0 0 1.07 0 -19.520)" style="font-size:9.15px;font-weight:400;fill:#172b4d;stroke:#172b4d;stroke-width:0.45px;">Excel Table</text>
<text x="257.11" y="313.75" text-anchor="middle" transform="matrix(1 0 0 1.07 0 -21.963)" style="font-size:9px;font-weight:400;fill:#444;stroke:#444;stroke-width:0.2px;">A</text>
<text x="296.33" y="313.75" text-anchor="middle" transform="matrix(1 0 0 1.07 0 -21.963)" style="font-size:9px;font-weight:400;fill:#444;stroke:#444;stroke-width:0.2px;">B</text>
<text x="335.55" y="313.75" text-anchor="middle" transform="matrix(1 0 0 1.07 0 -21.963)" style="font-size:9px;font-weight:400;fill:#444;stroke:#444;stroke-width:0.2px;">C</text>
<text x="374.77" y="313.75" text-anchor="middle" transform="matrix(1 0 0 1.07 0 -21.963)" style="font-size:9px;font-weight:700;fill:#217346;stroke:#217346;stroke-width:0.0px;">D</text>
<text x="413.99" y="313.75" text-anchor="middle" transform="matrix(1 0 0 1.07 0 -21.963)" style="font-size:9px;font-weight:400;fill:#444;stroke:#444;stroke-width:0.2px;">E</text>
<text x="453.21" y="313.75" text-anchor="middle" transform="matrix(1 0 0 1.07 0 -21.963)" style="font-size:9px;font-weight:400;fill:#444;stroke:#444;stroke-width:0.2px;">F</text>
<text x="492.43" y="313.75" text-anchor="middle" transform="matrix(1 0 0 1.07 0 -21.963)" style="font-size:9px;font-weight:400;fill:#444;stroke:#444;stroke-width:0.2px;">G</text>
<text x="531.65" y="313.75" text-anchor="middle" transform="matrix(1 0 0 1.07 0 -21.963)" style="font-size:9px;font-weight:400;fill:#444;stroke:#444;stroke-width:0.2px;">H</text>
<text x="570.87" y="313.75" text-anchor="middle" transform="matrix(1 0 0 1.07 0 -21.963)" style="font-size:9px;font-weight:400;fill:#444;stroke:#444;stroke-width:0.2px;">I</text>
<text x="610.09" y="313.75" text-anchor="middle" transform="matrix(1 0 0 1.07 0 -21.963)" style="font-size:9px;font-weight:400;fill:#444;stroke:#444;stroke-width:0.2px;">J</text>
<text x="649.31" y="313.75" text-anchor="middle" transform="matrix(1 0 0 1.07 0 -21.963)" style="font-size:9px;font-weight:400;fill:#444;stroke:#444;stroke-width:0.2px;">K</text>
<text x="688.53" y="313.75" text-anchor="middle" transform="matrix(1 0 0 1.07 0 -21.963)" style="font-size:9px;font-weight:400;fill:#444;stroke:#444;stroke-width:0.2px;">L</text>
<text x="727.75" y="313.75" text-anchor="middle" transform="matrix(1 0 0 1.07 0 -21.963)" style="font-size:9px;font-weight:400;fill:#444;stroke:#444;stroke-width:0.2px;">M</text>
<text x="766.97" y="313.75" text-anchor="middle" transform="matrix(1 0 0 1.07 0 -21.963)" style="font-size:9px;font-weight:400;fill:#444;stroke:#444;stroke-width:0.2px;">N</text>
<text x="806.19" y="313.75" text-anchor="middle" transform="matrix(1 0 0 1.07 0 -21.963)" style="font-size:9px;font-weight:400;fill:#444;stroke:#444;stroke-width:0.2px;">O</text>
<text x="845.50" y="313.75" text-anchor="middle" transform="matrix(1 0 0 1.07 0 -21.963)" style="font-size:9px;font-weight:400;fill:#444;stroke:#444;stroke-width:0.2px;">P</text>
<text x="225.00" y="326.35" text-anchor="middle" transform="matrix(1 0 0 1.07 0 -22.845)" style="font-size:8.6px;font-weight:400;fill:#333;stroke:#333;stroke-width:0.2px;">14</text>
<text x="225.00" y="339.04" text-anchor="middle" transform="matrix(1 0 0 1.07 0 -23.733)" style="font-size:8.6px;font-weight:400;fill:#333;stroke:#333;stroke-width:0.2px;">15</text>
<text x="225.00" y="351.74" text-anchor="middle" transform="matrix(1 0 0 1.07 0 -24.622)" style="font-size:8.6px;font-weight:700;fill:#217346;stroke:#217346;stroke-width:0.0px;">16</text>
<text x="225.00" y="364.43" text-anchor="middle" transform="matrix(1 0 0 1.07 0 -25.510)" style="font-size:8.6px;font-weight:400;fill:#333;stroke:#333;stroke-width:0.2px;">17</text>
<text x="225.00" y="377.12" text-anchor="middle" transform="matrix(1 0 0 1.07 0 -26.399)" style="font-size:8.6px;font-weight:400;fill:#333;stroke:#333;stroke-width:0.2px;">18</text>
<text x="225.00" y="389.81" text-anchor="middle" transform="matrix(1 0 0 1.07 0 -27.287)" style="font-size:8.6px;font-weight:400;fill:#333;stroke:#333;stroke-width:0.2px;">19</text>
<text x="225.00" y="402.51" text-anchor="middle" transform="matrix(1 0 0 1.07 0 -28.176)" style="font-size:8.6px;font-weight:400;fill:#333;stroke:#333;stroke-width:0.2px;">20</text>
<text x="225.00" y="415.20" text-anchor="middle" transform="matrix(1 0 0 1.07 0 -29.064)" style="font-size:8.6px;font-weight:400;fill:#333;stroke:#333;stroke-width:0.2px;">21</text>
<text x="225.00" y="427.89" text-anchor="middle" transform="matrix(1 0 0 1.07 0 -29.953)" style="font-size:8.6px;font-weight:400;fill:#333;stroke:#333;stroke-width:0.2px;">22</text>
<text x="225.00" y="440.59" text-anchor="middle" transform="matrix(1 0 0 1.07 0 -30.841)" style="font-size:8.6px;font-weight:400;fill:#333;stroke:#333;stroke-width:0.2px;">23</text>
<text x="225.00" y="453.28" text-anchor="middle" transform="matrix(1 0 0 1.07 0 -31.730)" style="font-size:8.6px;font-weight:400;fill:#333;stroke:#333;stroke-width:0.2px;">24</text>
<text x="225.00" y="465.97" text-anchor="middle" transform="matrix(1 0 0 1.07 0 -32.618)" style="font-size:8.6px;font-weight:400;fill:#333;stroke:#333;stroke-width:0.2px;">25</text>
<text x="225.00" y="478.66" text-anchor="middle" transform="matrix(1 0 0 1.07 0 -33.507)" style="font-size:8.6px;font-weight:400;fill:#333;stroke:#333;stroke-width:0.2px;">26</text>
<text x="225.00" y="491.36" text-anchor="middle" transform="matrix(1 0 0 1.07 0 -34.395)" style="font-size:8.6px;font-weight:400;fill:#333;stroke:#333;stroke-width:0.2px;">27</text>
<text x="283.00" y="505.75" transform="matrix(1 0 0 1.07 0 -35.403)" style="font-size:9.3px;font-weight:700;fill:#1e6b40;stroke:#1e6b40;stroke-width:0.25px;font-family:'Liberation Serif', serif;letter-spacing:-0.35px;">Sheet1</text>
<text x="323.00" y="505.75" transform="matrix(1 0 0 1.07 0 -35.403)" style="font-size:9.3px;font-weight:400;fill:#444;stroke:#444;stroke-width:0.2px;font-family:'Liberation Serif', serif;letter-spacing:-0.2px;">Sheet2</text>
<text x="218.70" y="522.25" transform="matrix(1 0 0 1.07 0 -36.558)" style="font-size:6.75px;font-weight:400;fill:#fff;stroke:#fff;stroke-width:0.2px;">Ready</text>
<text x="842.70" y="523.05" transform="matrix(1 0 0 1.07 0 -36.614)" style="font-size:7.9px;font-weight:400;fill:#fff;stroke:#fff;stroke-width:0.05px;">100%</text>
<text x="324.00" y="544.95" transform="matrix(1 0 0 1.07 0 -38.147)" style="font-size:9.17px;font-weight:400;fill:#333;stroke:#333;stroke-width:0.2px;">Height</text>
<text x="369.80" y="544.95" transform="matrix(1 0 0 1.07 0 -38.147)" style="font-size:9.29px;font-weight:400;fill:#333;stroke:#333;stroke-width:0.2px;">450px</text>
<text x="788.20" y="544.95" transform="matrix(1 0 0 1.07 0 -38.147)" style="font-size:9.03px;font-weight:400;fill:#c2c2c2;stroke:#c2c2c2;stroke-width:0.2px;">Revert</text>
<text x="832.30" y="544.95" transform="matrix(1 0 0 1.07 0 -38.147)" style="font-size:8.7px;font-weight:400;fill:#fff;stroke:#fff;stroke-width:0.45px;">Save</text>
<text x="210.90" y="606.35" transform="matrix(1 0 0 1.07 0 -42.445)" style="font-size:11.0px;font-weight:400;fill:#172b4d;stroke:#172b4d;stroke-width:0.5px;">Activity</text>
<text x="210.90" y="621.95" transform="matrix(1 0 0 1.07 0 -43.537)" style="font-size:8.71px;font-weight:400;fill:#44546f;stroke:#44546f;stroke-width:0.2px;">Show:</text>
<text x="247.20" y="621.95" transform="matrix(1 0 0 1.07 0 -43.537)" style="font-size:9.2px;font-weight:400;fill:#172b4d;stroke:#172b4d;stroke-width:0.45px;">All</text>
<text x="270.40" y="621.95" transform="matrix(1 0 0 1.07 0 -43.537)" style="font-size:9.23px;font-weight:400;fill:#0c66e4;stroke:#0c66e4;stroke-width:0.2px;">Comments</text>
<text x="328.20" y="621.95" transform="matrix(1 0 0 1.07 0 -43.537)" style="font-size:9.4px;font-weight:400;fill:#172b4d;stroke:#172b4d;stroke-width:0.45px;">History</text>
<text x="801.10" y="621.65" transform="matrix(1 0 0 1.07 0 -43.516)" style="font-size:9.4px;font-weight:400;fill:#172b4d;stroke:#172b4d;stroke-width:0.35px;">Newest first</text>
<text x="254.40" y="659.35" transform="matrix(1 0 0 1.07 0 -46.155)" style="font-size:8.98px;font-weight:400;fill:#6f737b;stroke:#6f737b;stroke-width:0.2px;">Add a comment...</text>
<text x="271.40" y="685.35" transform="matrix(1 0 0 1.07 0 -47.975)" style="font-size:9.15px;font-weight:400;fill:#172b4d;stroke:#172b4d;stroke-width:0.38px;">Looks good!</text>
<text x="353.80" y="685.35" transform="matrix(1 0 0 1.07 0 -47.975)" style="font-size:9.0px;font-weight:400;fill:#172b4d;stroke:#172b4d;stroke-width:0.38px;">Need help?</text>
<text x="432.60" y="685.35" transform="matrix(1 0 0 1.07 0 -47.975)" style="font-size:9.2px;font-weight:400;fill:#172b4d;stroke:#172b4d;stroke-width:0.38px;">This is blocked...</text>
<text x="534.20" y="685.35" transform="matrix(1 0 0 1.07 0 -47.975)" style="font-size:9.15px;font-weight:400;fill:#172b4d;stroke:#172b4d;stroke-width:0.38px;">Can you clarify...?</text>
<text x="640.30" y="685.35" transform="matrix(1 0 0 1.07 0 -47.975)" style="font-size:9.15px;font-weight:400;fill:#172b4d;stroke:#172b4d;stroke-width:0.38px;">This is on track</text>
<text x="241.00" y="714.45" transform="matrix(1 0 0 1.07 0 -50.012)" style="font-size:8.1px;font-weight:400;fill:#6b778c;stroke:#6b778c;stroke-width:0.2px;"><tspan style="font-weight:700;fill:#505f79;stroke:#505f79;stroke-width:0">Pro tip:</tspan> press</text>
<text x="295.30" y="714.45" transform="matrix(1 0 0 1.07 0 -50.012)" style="font-size:7.8px;font-weight:700;fill:#172b4d;stroke:#172b4d;stroke-width:0.0px;">M</text>
<text x="306.50" y="714.45" transform="matrix(1 0 0 1.07 0 -50.012)" style="font-size:8.1px;font-weight:400;fill:#6b778c;stroke:#6b778c;stroke-width:0.2px;">to comment</text>
<text x="899.80" y="60.85" transform="matrix(1 0 0 1.07 0 -4.260)" style="font-size:8.9px;font-weight:400;fill:#172b4d;stroke:#172b4d;stroke-width:0.45px;">To Do</text>
<text x="974.70" y="60.85" transform="matrix(1 0 0 1.07 0 -4.260)" style="font-size:9.2px;font-weight:400;fill:#172b4d;stroke:#172b4d;stroke-width:0.45px;">Actions</text>
<text x="900.20" y="93.85" transform="matrix(1 0 0 1.07 0 -6.570)" style="font-size:9.19px;font-weight:400;fill:#44546f;stroke:#44546f;stroke-width:0.2px;">Details</text>
<text x="900.30" y="124.85" transform="matrix(1 0 0 1.07 0 -8.740)" style="font-size:9.0px;font-weight:400;fill:#44546f;stroke:#44546f;stroke-width:0.4px;">Assignee</text>
<text x="900.30" y="153.05" transform="matrix(1 0 0 1.07 0 -10.714)" style="font-size:9.0px;font-weight:400;fill:#44546f;stroke:#44546f;stroke-width:0.4px;">Labels</text>
<text x="900.30" y="180.75" transform="matrix(1 0 0 1.07 0 -12.653)" style="font-size:9.0px;font-weight:400;fill:#44546f;stroke:#44546f;stroke-width:0.4px;">Sprint</text>
<text x="900.30" y="208.85" transform="matrix(1 0 0 1.07 0 -14.620)" style="font-size:9.2px;font-weight:400;fill:#44546f;stroke:#44546f;stroke-width:0.4px;">Story point estimate</text>
<text x="900.30" y="242.85" transform="matrix(1 0 0 1.07 0 -17.000)" style="font-size:9.0px;font-weight:400;fill:#44546f;stroke:#44546f;stroke-width:0.4px;">Development</text>
<text x="900.30" y="267.45" transform="matrix(1 0 0 1.07 0 -18.722)" style="font-size:9.0px;font-weight:400;fill:#44546f;stroke:#44546f;stroke-width:0.4px;">Reporter</text>
<text x="1030.70" y="124.45" transform="matrix(1 0 0 1.07 0 -8.712)" style="font-size:8.95px;font-weight:400;fill:#172b4d;stroke:#172b4d;stroke-width:0.2px;">Khairul Danial</text>
<text x="1008.10" y="152.25" transform="matrix(1 0 0 1.07 0 -10.658)" style="font-size:8.78px;font-weight:400;fill:#626f86;stroke:#626f86;stroke-width:0.2px;">None</text>
<text x="1008.10" y="179.85" transform="matrix(1 0 0 1.07 0 -12.590)" style="font-size:8.78px;font-weight:400;fill:#626f86;stroke:#626f86;stroke-width:0.2px;">None</text>
<text x="1008.10" y="210.35" transform="matrix(1 0 0 1.07 0 -14.725)" style="font-size:8.78px;font-weight:400;fill:#626f86;stroke:#626f86;stroke-width:0.2px;">None</text>
<text x="1030.60" y="266.55" transform="matrix(1 0 0 1.07 0 -18.659)" style="font-size:8.95px;font-weight:400;fill:#172b4d;stroke:#172b4d;stroke-width:0.2px;">Khairul Danial</text>
<text x="900.40" y="310.05" transform="matrix(1 0 0 1.07 0 -21.704)" style="font-size:9.3px;font-weight:400;fill:#44546f;stroke:#44546f;stroke-width:0.45px;">Automation</text>
<text x="978.80" y="310.05" transform="matrix(1 0 0 1.07 0 -21.704)" style="font-size:7.86px;font-weight:400;fill:#626f86;stroke:#626f86;stroke-width:0.2px;">Rule executions</text>
<text x="900.80" y="341.85" transform="matrix(1 0 0 1.07 0 -23.930)" style="font-size:8.0px;font-weight:400;fill:#626f86;stroke:#626f86;stroke-width:0.2px;">Created 9 hours ago</text>
<text x="900.80" y="355.75" transform="matrix(1 0 0 1.07 0 -24.903)" style="font-size:8.05px;font-weight:400;fill:#626f86;stroke:#626f86;stroke-width:0.2px;">Updated 9 hours ago</text>
<text x="1195.00" y="343.05" transform="matrix(1 0 0 1.07 0 -24.014)" style="font-size:9.29px;font-weight:400;fill:#44546f;stroke:#44546f;stroke-width:0.2px;">Configure</text>
<text x="1208.60" y="703.65" transform="matrix(1 0 0 1.07 0 -49.256)" style="font-size:10.0px;font-weight:400;fill:#fff;stroke:#fff;stroke-width:0.4px;">Quickstart</text></svg>
<svg class="r" style="left:440px;top:339px;" width="28" height="28" viewBox="0 0 28 28"><path d="M4 4 L23.5 12 L14 15.5 L11.5 24.5Z" fill="#fff" stroke="#000" stroke-width="2.8" stroke-linejoin="round"/></svg>
</body></html>
